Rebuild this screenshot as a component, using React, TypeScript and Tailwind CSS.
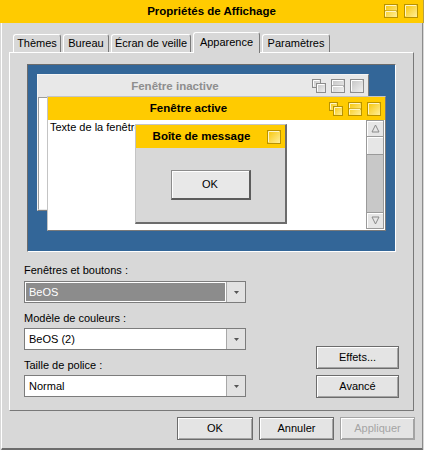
import React from "react";

type Tone = "yellow" | "gray";

const TONES = {
  yellow: { edge: "#b89200", hi: "#fff6c8", a: "#f7c400", b: "#fff0a0" },
  gray: { edge: "#8c8c8c", hi: "#ffffff", a: "#c2c2c2", b: "#f2f2f2" },
};

function WinButton({ kind, tone }: { kind: "close" | "zoom" | "min"; tone: Tone }) {
  const c = TONES[tone];
  const gid = `wb-${tone}`;
  const defs = (
    <defs>
      <linearGradient id={gid} x1="0" y1="0" x2="1" y2="1">
        <stop offset="0" stopColor={c.a} />
        <stop offset="1" stopColor={c.b} />
      </linearGradient>
    </defs>
  );
  if (kind === "close")
    return (
      <svg width="14" height="14" viewBox="0 0 14 14">
        {defs}
        <rect x="0.5" y="0.5" width="13" height="13" fill={`url(#${gid})`} stroke={c.edge} />
        <path d="M1.5 12V1.5H12" fill="none" stroke={c.hi} />
      </svg>
    );
  if (kind === "zoom")
    return (
      <svg width="14" height="14" viewBox="0 0 14 14">
        {defs}
        <rect x="0.5" y="0.5" width="13" height="13" fill={`url(#${gid})`} stroke={c.edge} />
        <path d="M1 7H13" stroke={c.edge} />
        <path d="M1.5 6V1.5H12M1.5 12.5V7.5H12" fill="none" stroke={c.hi} />
      </svg>
    );
  return (
    <svg width="14" height="14" viewBox="0 0 14 14">
      {defs}
      <rect x="0.5" y="0.5" width="8" height="8" fill={`url(#${gid})`} stroke={c.edge} />
      <path d="M1.5 7.5V1.5H7.5" fill="none" stroke={c.hi} />
      <rect x="4.5" y="4.5" width="9" height="9" fill={`url(#${gid})`} stroke={c.edge} />
      <path d="M5.5 12.5V5.5H12.5" fill="none" stroke={c.hi} />
    </svg>
  );
}

function Tab({ label, w, active }: { label: string; w: string; active?: boolean }) {
  if (active)
    return (
      <div
        className={`${w} h-[21px] -mb-px relative z-10 bg-[#d8d8d8] flex justify-center pt-[3px] rounded-t-[3px] border-t border-l border-white border-r border-r-[#7a7a7a]`}
      >
        {label}
      </div>
    );
  return (
    <div
      className={`${w} h-[18px] flex items-center justify-center rounded-t-[3px] border-t border-l border-white border-r border-r-[#7a7a7a]`}
    >
      {label}
    </div>
  );
}

function Dropdown({ value, selected }: { value: string; selected?: boolean }) {
  return (
    <div className="flex h-[22px] w-[222px] border border-[#7c7c7c]">
      <div
        className={`flex-1 flex items-center pl-[3px] border border-white ${
          selected ? "bg-[#8c8c8c] text-white" : "bg-white"
        }`}
      >
        {value}
      </div>
      <div className="w-[19px] flex items-center justify-center bg-[#e2e2e2] border-l border-[#a8a8a8]">
        <svg width="5" height="3" viewBox="0 0 5 3">
          <path d="M0 0H5L2.5 3Z" fill="#555" />
        </svg>
      </div>
    </div>
  );
}

function Button({ label, w, disabled }: { label: string; w: string; disabled?: boolean }) {
  return (
    <div
      className={`${w} h-[23px] flex items-center justify-center bg-[#e4e4e4] border shadow-[inset_1px_1px_0_#fff,inset_-1px_-1px_0_#a4a4a4] ${
        disabled ? "border-[#a4a4a4] text-[#a4a4a4]" : "border-[#6c6c6c]"
      }`}
    >
      {label}
    </div>
  );
}

function ScrollBox({ up }: { up?: boolean }) {
  return (
    <div className="h-[17px] flex items-center justify-center bg-[#e6e6e6] border border-[#9a9a9a] shadow-[inset_1px_1px_0_#fff]">
      <svg width="9" height="9" viewBox="0 0 9 9">
        <path d={up ? "M4.5 1L8 8H1Z" : "M4.5 8L8 1H1Z"} fill="none" stroke="#8a8a8a" />
      </svg>
    </div>
  );
}

export default function App() {
  return (
    <div className="w-[424px] h-[450px] bg-[#d8d8d8] flex flex-col text-[11px] leading-[13px] text-black font-['Liberation_Sans',Arial,sans-serif] overflow-hidden">
      {/* title bar */}
      <div className="h-[23px] bg-[#ffcb00] relative flex items-center justify-center border-r border-r-[#b8a040]">
        <span className="font-bold text-[11.5px]">Propriétés de Affichage</span>
        <div className="absolute right-[5px] top-[4px] flex gap-[6px]">
          <WinButton kind="zoom" tone="yellow" />
          <WinButton kind="close" tone="yellow" />
        </div>
      </div>

      {/* body */}
      <div className="flex-1 flex flex-col ml-px border-l border-white mr-px border-r border-r-[#8c8c8c] border-b-2 border-b-[#6c6c6c] pt-[9px]">
        <div className="flex items-end h-[20px] ml-[11px] gap-[2px]">
          <Tab label="Thèmes" w="w-[48px]" />
          <Tab label="Bureau" w="w-[46px]" />
          <Tab label="Écran de veille" w="w-[80px]" />
          <Tab label="Apparence" w="w-[67px]" active />
          <Tab label="Paramètres" w="w-[68px]" />
        </div>

        <div className="h-[359px] mx-[7px] mr-[8px] flex flex-col border border-t-white border-l-white border-r-[#787878] border-b-[#787878]">
          {/* preview */}
          <div className="ml-[17px] mt-[11px] w-[369px] h-[188px] border border-t-[#6c6c6c] border-l-[#6c6c6c] border-r-white border-b-white bg-[#336698] relative">
            {/* inactive window */}
            <div className="absolute left-[9px] top-[9px] w-[332px] h-[137px] flex flex-col border border-t-[#f4f4f4] border-l-[#f4f4f4] border-r-[#7c7c7c] border-b-[#7c7c7c] bg-[#e8e8e8]">
              <div className="h-[22px] flex items-center">
                <span className="flex-1 text-center font-bold text-[11.5px] text-[#8e8e8e]">Fenêtre inactive</span>
                <div className="flex gap-[5px] pr-[4px]">
                  <WinButton kind="min" tone="gray" />
                  <WinButton kind="zoom" tone="gray" />
                  <WinButton kind="close" tone="gray" />
                </div>
              </div>
              <div className="flex-1 bg-white border border-t-[#9c9c9c] border-l-[#9c9c9c] border-r-[#e8e8e8] border-b-[#e8e8e8]" />
            </div>

            {/* active window */}
            <div className="absolute left-[19px] top-[31px] w-[339px] h-[135px] flex flex-col border border-t-[#c4c4c4] border-l-[#c4c4c4] border-r-[#7a7a7a] border-b-[#7a7a7a] bg-white">
              <div className="h-[23px] bg-[#ffcb00] flex items-center">
                <span className="flex-1 text-center font-bold text-[11.5px]">Fenêtre active</span>
                <div className="flex gap-[5px] pr-[4px]">
                  <WinButton kind="min" tone="yellow" />
                  <WinButton kind="zoom" tone="yellow" />
                  <WinButton kind="close" tone="yellow" />
                </div>
              </div>
              <div className="flex-1 flex">
                <div className="flex-1 pl-[2px] pt-[1px] whitespace-nowrap">Texte de la fenêtre</div>
                <div className="w-[18px] mr-px mb-px flex flex-col">
                  <ScrollBox up />
                  <div className="h-[18px] bg-[#e6e6e6] border border-[#9a9a9a] border-t-0 shadow-[inset_1px_1px_0_#fff]" />
                  <div className="flex-1 bg-[#c8c8c8] border-x border-[#9a9a9a]" />
                  <ScrollBox />
                </div>
              </div>
            </div>

            {/* message box */}
            <div className="absolute left-[107px] top-[59px] w-[152px] h-[100px] flex flex-col border border-t-[#c4c4c4] border-l-[#c4c4c4] border-r-2 border-b-2 border-r-[#6c6c6c] border-b-[#6c6c6c] bg-[#d8d8d8]">
              <div className="h-[23px] bg-[#ffcb00] flex items-center">
                <span className="flex-1 text-center font-bold text-[11.5px]">Boîte de message</span>
                <div className="pr-[4px] flex">
                  <WinButton kind="close" tone="yellow" />
                </div>
              </div>
              <div className="flex-1 flex items-center justify-center pb-[1px]">
                <div className="w-[80px] h-[30px] flex items-center justify-center bg-[#e8e8e8] border border-t-[#8c8c8c] border-l-[#8c8c8c] border-r-2 border-b-2 border-r-[#5c5c5c] border-b-[#5c5c5c] shadow-[inset_1px_1px_0_#fff]">
                  OK
                </div>
              </div>
            </div>
          </div>

          {/* options */}
          <div className="flex justify-between pl-[14px] pr-[14px] pt-[12px]">
            <div className="flex flex-col w-[222px]">
              <span>Fenêtres et boutons :</span>
              <div className="mt-[4px]">
                <Dropdown value="BeOS" selected />
              </div>
              <span className="mt-[9px]">Modèle de couleurs :</span>
              <div className="mt-[3px]">
                <Dropdown value="BeOS (2)" />
              </div>
              <span className="mt-[9px]">Taille de police :</span>
              <div className="mt-[3px]">
                <Dropdown value="Normal" />
              </div>
            </div>
            <div className="flex flex-col justify-end gap-[6px] -mb-px">
              <Button label="Effets..." w="w-[83px]" />
              <Button label="Avancé" w="w-[83px]" />
            </div>
          </div>
        </div>

        {/* bottom buttons */}
        <div className="mt-[6px] flex justify-end gap-[6px] pr-[7px]">
          <Button label="OK" w="w-[76px]" />
          <Button label="Annuler" w="w-[75px]" />
          <Button label="Appliquer" w="w-[75px]" disabled />
        </div>
      </div>
    </div>
  );
}
